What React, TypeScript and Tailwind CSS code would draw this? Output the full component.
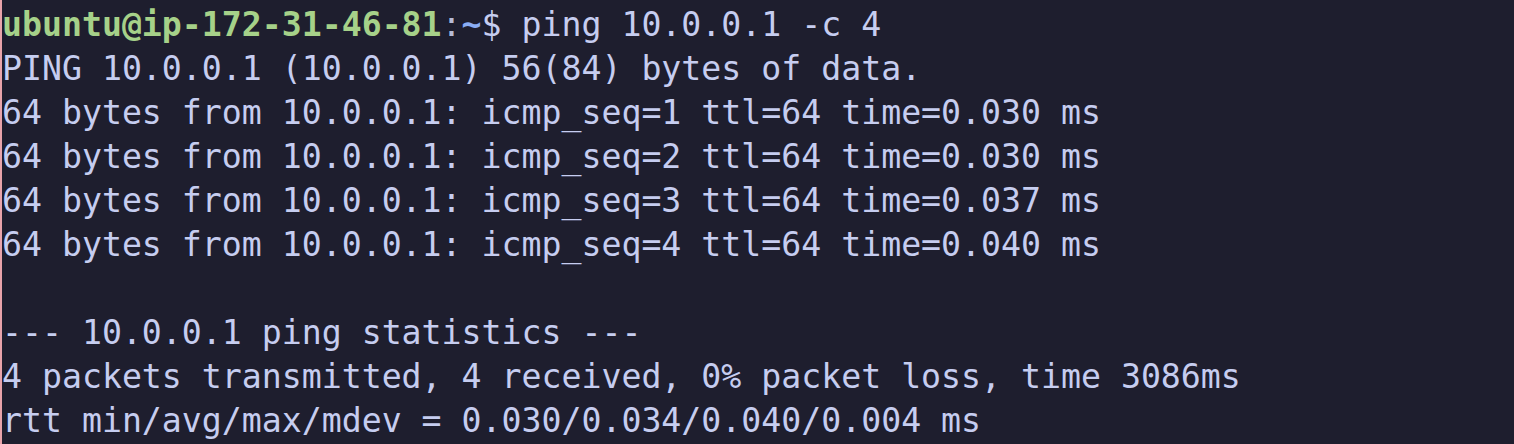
import React from 'react';

const output = [
  'PING 10.0.0.1 (10.0.0.1) 56(84) bytes of data.',
  '64 bytes from 10.0.0.1: icmp_seq=1 ttl=64 time=0.030 ms',
  '64 bytes from 10.0.0.1: icmp_seq=2 ttl=64 time=0.030 ms',
  '64 bytes from 10.0.0.1: icmp_seq=3 ttl=64 time=0.037 ms',
  '64 bytes from 10.0.0.1: icmp_seq=4 ttl=64 time=0.040 ms',
  '',
  '--- 10.0.0.1 ping statistics ---',
  '4 packets transmitted, 4 received, 0% packet loss, time 3086ms',
  'rtt min/avg/max/mdev = 0.030/0.034/0.040/0.004 ms',
];

export default function App() {
  return (
    <div className="w-[1514px] h-[444px] bg-[#1e1e2e] border-l-2 border-[#e8a3aa] overflow-hidden">
      <div className="pt-[3px] font-['DejaVu_Sans_Mono',monospace] text-[33.2px] leading-[44px] text-[#c6cdf0] whitespace-pre">
        <div>
          <span className="font-bold text-[#a6d189]">ubuntu@ip-172-31-46-81</span>
          <span className="text-[#b5bbd6]">:</span>
          <span className="font-bold text-[#8aadf4]">~</span>
          <span>$ ping 10.0.0.1 -c 4</span>
        </div>
        {output.map((line, i) => (
          <div key={i} className="h-[44px]">
            {line}
          </div>
        ))}
      </div>
    </div>
  );
}
